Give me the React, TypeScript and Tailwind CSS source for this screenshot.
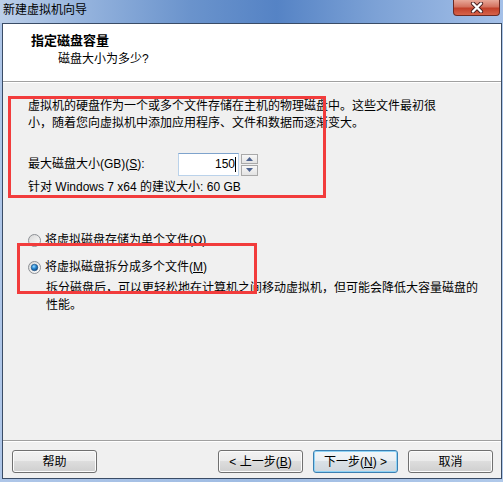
import React from "react";

function Radio({ checked }: { checked?: boolean }) {
  return (
    <svg width="13" height="13" viewBox="0 0 13 13" className="shrink-0">
      <defs>
        <linearGradient id={checked ? "rg1" : "rg0"} x1="0" y1="0" x2="1" y2="1">
          <stop offset="0" stopColor="#d6d6d6" />
          <stop offset="1" stopColor="#ffffff" />
        </linearGradient>
        <radialGradient id="dot" cx="0.4" cy="0.35" r="0.7">
          <stop offset="0" stopColor="#9fdcff" />
          <stop offset="0.45" stopColor="#2a8ad4" />
          <stop offset="1" stopColor="#0b3f78" />
        </radialGradient>
      </defs>
      <circle cx="6.5" cy="6.5" r="6" fill={`url(#${checked ? "rg1" : "rg0"})`} stroke="#8c8f94" strokeWidth="1" />
      {checked && <circle cx="6.5" cy="6.5" r="3.3" fill="url(#dot)" stroke="#1c4f80" strokeWidth="0.6" />}
    </svg>
  );
}

function Btn({ children, focused }: { children: React.ReactNode; focused?: boolean }) {
  return (
    <div
      className={
        "w-[85px] h-[23px] rounded-[3px] border flex items-center justify-center " +
        (focused
          ? "border-[#3c7fb1] shadow-[inset_0_0_0_1px_#8fd3f5] bg-[linear-gradient(#f2f6f9_0%,#eaeff3_45%,#d9e1e7_50%,#cfd7de_100%)]"
          : "border-[#707070] shadow-[inset_0_0_0_1px_#fcfcfc] bg-[linear-gradient(#f2f2f2_0%,#ebebeb_45%,#dddddd_50%,#cfcfcf_100%)]")
      }
    >
      {children}
    </div>
  );
}

export default function App() {
  return (
    <div className="relative w-[503px] h-[482px] flex flex-col overflow-hidden bg-[linear-gradient(90deg,#aec6e8_0%,#9fbce3_50%,#b0c9ea_100%)] font-['Liberation_Sans','Noto_Sans_CJK_SC',sans-serif] text-[12px] text-black">
      {/* Title bar */}
      <div className="h-[23px] shrink-0 flex items-start justify-between bg-[linear-gradient(90deg,#bccfe9_0%,#92b1dc_18%,#6a93cc_38%,#5583c5_55%,#7da2d6_75%,#a4c0e8_100%)]">
        <div className="pl-[3px] pt-[2px] leading-[16px]">新建虚拟机向导</div>
        <div className="mr-[3px] w-[47px] h-[16px] rounded-b-[4px] border border-t-0 border-[#6b2a24] bg-[linear-gradient(#e8a899_0%,#d4725f_45%,#c2402a_55%,#d6634a_100%)] flex items-center justify-center">
          <svg width="14" height="11" viewBox="0 0 14 11">
            <path d="M3 1.5 L11 9.5 M11 1.5 L3 9.5" stroke="#4a2020" strokeWidth="4.2" strokeLinecap="round" />
            <path d="M3 1.5 L11 9.5 M11 1.5 L3 9.5" stroke="#ffffff" strokeWidth="2.4" strokeLinecap="round" />
          </svg>
        </div>
      </div>

      {/* Client */}
      <div className="ml-[2px] w-[500px] h-[456px] border border-[#3a4c66] flex flex-col bg-[#f0f0f0]">
        {/* Header */}
        <div className="h-[57px] bg-white shrink-0 pt-[9px]">
          <div className="pl-[28px] font-bold text-[13px] leading-[16px]">指定磁盘容量</div>
          <div className="pl-[55px] mt-[2px] leading-[16px]">磁盘大小为多少?</div>
        </div>
        <div className="h-px bg-[#a0a0a0]" />
        <div className="h-px bg-white" />

        {/* Body */}
        <div className="flex-1 pt-[15px] pl-[25px]">
          <div className="leading-[17px] whitespace-nowrap">
            <div>虚拟机的硬盘作为一个或多个文件存储在主机的物理磁盘中。这些文件最初很</div>
            <div>小，随着您向虚拟机中添加应用程序、文件和数据而逐渐变大。</div>
          </div>

          <div className="mt-[21px] flex items-center h-[23px]">
            <div className="w-[150px] leading-[17px]">
              最大磁盘大小(GB)(<span className="underline">S</span>):
            </div>
            <div className="w-[61px] h-[23px] bg-white border border-[#bad2ea] border-t-[#7ea3cc] flex items-center justify-end pr-[2px] leading-[17px]">
              <span>150</span>
              <span className="inline-block w-px h-[15px] bg-black" />
            </div>
            <div className="ml-[2px] w-[17px] h-[22px] flex flex-col gap-px">
              <div className="flex-1 border border-[#a9a9a9] bg-[linear-gradient(#f7f7f7,#e3e3e3)] flex items-center justify-center">
                <svg width="7" height="4" viewBox="0 0 7 4"><path d="M0 4 L3.5 0 L7 4 Z" fill="#4d6390" /></svg>
              </div>
              <div className="flex-1 border border-[#a9a9a9] bg-[linear-gradient(#f7f7f7,#e3e3e3)] flex items-center justify-center">
                <svg width="7" height="4" viewBox="0 0 7 4"><path d="M0 0 L7 0 L3.5 4 Z" fill="#4d6390" /></svg>
              </div>
            </div>
          </div>

          <div className="mt-[3px] leading-[17px]">针对 Windows 7 x64 的建议大小: 60 GB</div>

          <div className="mt-[36px] flex items-center gap-[4px] h-[17px] leading-[17px]">
            <Radio />
            <span>
              将虚拟磁盘存储为单个文件(<span className="underline">O</span>)
            </span>
          </div>
          <div className="mt-[10px] flex items-center gap-[4px] h-[17px] leading-[17px]">
            <Radio checked />
            <span>
              将虚拟磁盘拆分成多个文件(<span className="underline">M</span>)
            </span>
          </div>
          <div className="mt-[4px] pl-[18px] leading-[17px] whitespace-nowrap">
            <div>拆分磁盘后，可以更轻松地在计算机之间移动虚拟机，但可能会降低大容量磁盘的</div>
            <div>性能。</div>
          </div>
        </div>

        <div className="h-px bg-[#a0a0a0]" />
        <div className="h-px bg-white" />

        {/* Buttons */}
        <div className="h-[36px] shrink-0 flex items-start pt-[8px] pl-[9px] pr-[8px]">
          <Btn>帮助</Btn>
          <div className="flex-1" />
          <div className="flex gap-[10px]">
            <Btn>
              &lt; 上一步(<span className="underline">B</span>)
            </Btn>
            <Btn focused>
              下一步(<span className="underline">N</span>) &gt;
            </Btn>
            <Btn>取消</Btn>
          </div>
        </div>
      </div>

      {/* Red annotation boxes */}
      <div className="absolute left-[8px] top-[96px] w-[318px] h-[102px] border-[3px] border-[#f23c3c]" />
      <div className="absolute left-[17px] top-[243px] w-[240px] h-[51px] border-[3px] border-[#f23c3c]" />
    </div>
  );
}
